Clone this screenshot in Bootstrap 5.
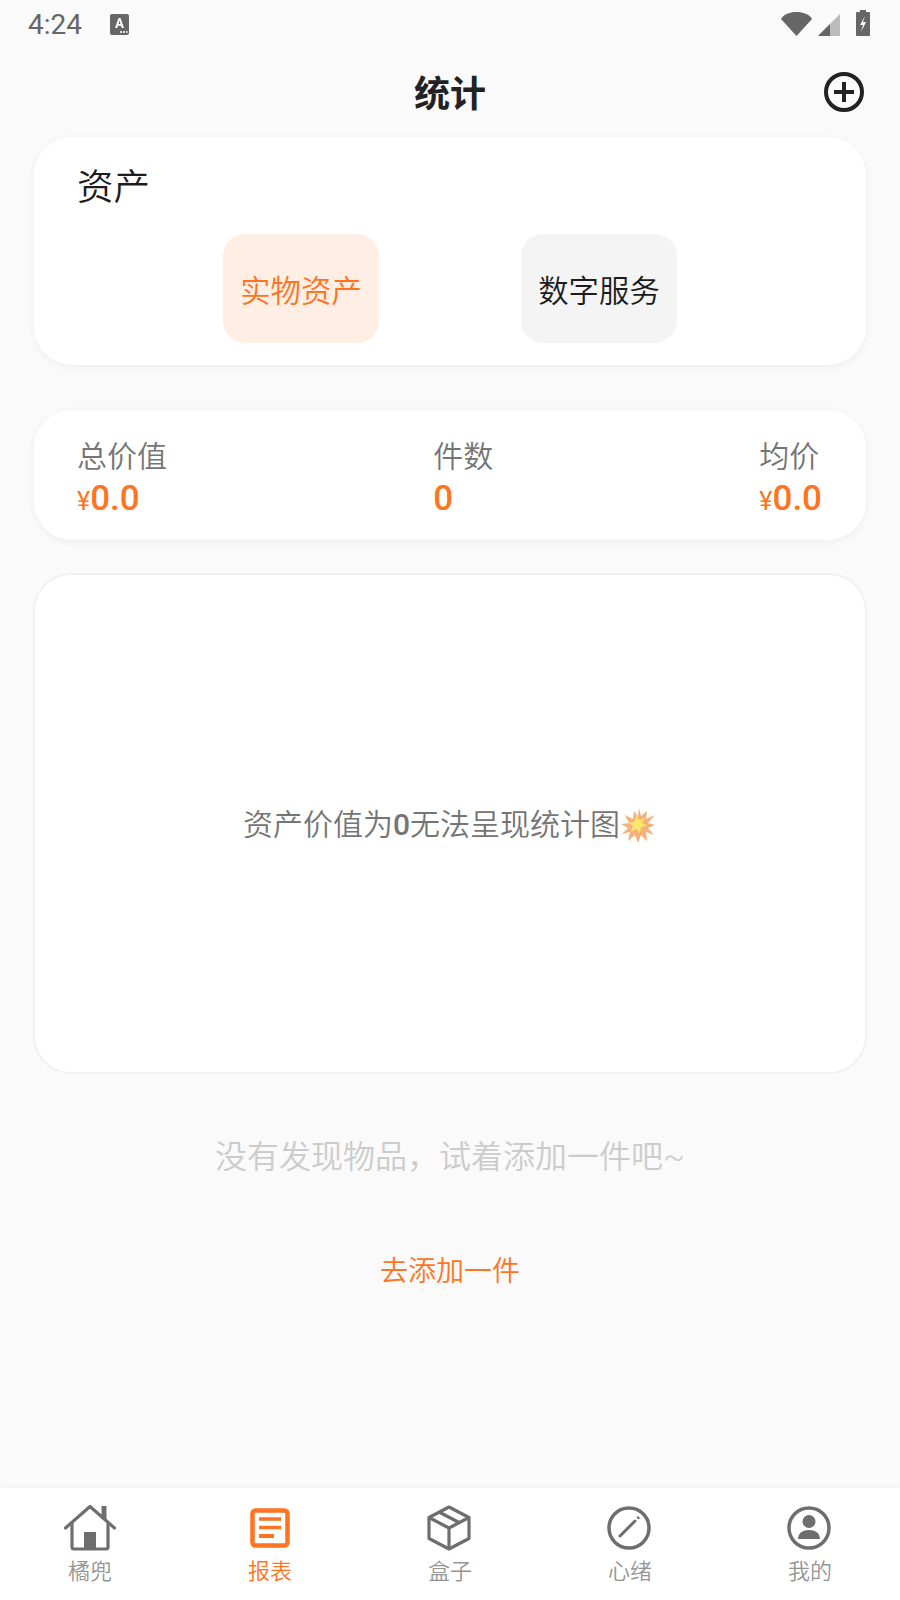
<!DOCTYPE html>
<html lang="zh-CN">
  <head>
    <meta charset="UTF-8" />
    <meta name="viewport" content="width=device-width, initial-scale=1" />
    <title>统计</title>
    <link href="https://cdn.jsdelivr.net/npm/bootstrap@5.3.2/dist/css/bootstrap.min.css" rel="stylesheet" />
    <style>
      body {
        background-color: #fafafa;
        font-family: "Roboto", "Noto Sans CJK SC", sans-serif;
        color: #222;
        width: 900px;
        height: 1600px;
        overflow: hidden;
      }
      .app-screen { height: 1600px; }
      .status-row { height: 50px; padding: 0 30px 0 28px; color: #666; }
      .status-time { font-size: 28px; line-height: 50px; width: 82px; }
      .status-icons { margin-bottom: 4px; }
      .signal-icon { margin: 0 16px 0 6px; }
      .title-row { height: 87px; position: relative; }
      .title-text { font-size: 36px; font-weight: 700; line-height: 91px; margin: 0; }
      .add-btn { position: absolute; right: 36px; top: 22px; line-height: 0; }
      .sheet {
        margin: 0 34px;
        background: #fff;
        border-radius: 38px;
        box-shadow: 0 2px 10px rgba(0, 0, 0, 0.05);
      }
      .asset-sheet { height: 228px; padding: 27px 43px 0; }
      .asset-title { font-size: 36.5px; line-height: 48px; font-weight: 350; color: #1c1c1c; }
      .asset-types { gap: 142px; margin-top: 22px; }
      .asset-type {
        width: 156px;
        height: 109px;
        border-radius: 22px;
        font-size: 30.4px;
        font-weight: 350;
        padding-top: 7px;
        background: #f4f4f4;
        color: #1c1c1c;
      }
      .asset-type.is-on { background: #ffeee4; color: #ff7420; }
      .sum-sheet { height: 130px; margin-top: 45px; padding: 27px 44px 0 43px; }
      .sum-label { font-size: 30px; line-height: 40px; color: #757575; font-weight: 350; }
      .sum-value { font-size: 35px; font-weight: 500; line-height: 44px; color: #ff7420; }
      .sum-value small { font-size: 25px; font-weight: 400; }
      .chart-sheet {
        height: 501px;
        margin: 33px 33px 0;
        padding-top: 2px;
        border: 2px solid #f1f1f1;
        box-shadow: none;
        font-size: 30px;
        font-weight: 350;
        color: #757575;
      }
      .chart-sheet b { font-weight: 500; }
      .burst-icon { margin: 0 2px 0 -1px; }
      .empty-text { margin-top: 60px; font-size: 32px; line-height: 46px; color: #ccc; font-weight: 350; }
      .add-link { margin-top: 69px; font-size: 28px; line-height: 46px; color: #ff7420; font-weight: 350; }
      .tabbar {
        height: 112px;
        background: #fff;
        box-shadow: 0 -2px 4px rgba(0, 0, 0, 0.03);
      }
      .tab-item { width: 180px; color: #959595; font-size: 22px; line-height: 30px; font-weight: 350; }
      .tab-item.is-on { color: #ff7420; }
      .tab-icon { height: 50px; margin-top: 15px; margin-bottom: 4px; }
      .nudge-left { margin-right: 3px; }
    </style>
  </head>
  <body>
    <div class="app-screen d-flex flex-column">
      <div class="status-row d-flex align-items-center">
        <span class="status-time">4:24</span>
        <svg width="19" height="22" viewBox="0 0 19 22">
          <rect width="19" height="21" x="0" y="0" rx="2" fill="#666" />
          <path d="M5 14 8.500 4h2l3.500 10h-2.200l-.7-2.200H7.900L7.200 14zM8.500 10h2L9.500 6.600z" fill="#fff" />
          <path d="M10 17h2v2h-2zM13 17h2v2h-2zM16 17h1.500v2H16z" fill="#ddd" />
        </svg>
        <div class="status-icons ms-auto d-flex align-items-end">
          <svg width="31" height="25" viewBox="0 0 31 25"><path d="M0 8C3 3 9 1 15.500 1S28 3 31 8L15.500 25z" fill="#666" /></svg>
          <svg width="22" height="22" viewBox="0 0 22 22" class="signal-icon"><path d="M22 0v22H0z" fill="#bbb" /><path d="M12 10v12H0z" fill="#666" /></svg>
          <svg width="14" height="26" viewBox="0 0 14 26"><path d="M4 0h6v2h3a1 1 0 0 1 1 1v22a1 1 0 0 1-1 1H1a1 1 0 0 1-1-1V3a1 1 0 0 1 1-1h3z" fill="#666" /><path d="M9 6 4 15h3l-2 7 5-10H7z" fill="#fff" /></svg>
        </div>
      </div>

      <div class="title-row text-center">
        <h1 class="title-text">统计</h1>
        <svg class="add-btn" width="40" height="40" viewBox="0 0 40 40" fill="none" stroke="#222" stroke-width="4">
          <circle cx="20" cy="20" r="18" />
          <path d="M20 10v20M10 20h20" />
        </svg>
      </div>

      <div class="sheet asset-sheet">
        <div class="asset-title">资产</div>
        <div class="asset-types d-flex justify-content-center">
          <div class="asset-type is-on d-flex align-items-center justify-content-center">实物资产</div>
          <div class="asset-type d-flex align-items-center justify-content-center">数字服务</div>
        </div>
      </div>

      <div class="sheet sum-sheet d-flex justify-content-between">
        <div>
          <div class="sum-label">总价值</div>
          <div class="sum-value"><small>¥</small>0.0</div>
        </div>
        <div>
          <div class="sum-label">件数</div>
          <div class="sum-value">0</div>
        </div>
        <div>
          <div class="sum-label">均价</div>
          <div class="sum-value"><small>¥</small>0.0</div>
        </div>
      </div>

      <div class="sheet chart-sheet d-flex align-items-center justify-content-center">
        <span>资产价值为<b>0</b>无法呈现统计图</span>
        <svg width="36" height="36" viewBox="0 0 36 36" class="burst-icon">
          <path d="M20 1l2 8 6-5-1 8 9-4-7 8 7 2-7 3 6 7-8-3 1 9-6-6-3 8-3-8-7 6 2-9-8 2 6-6-7-4 8-1-4-8 8 4 1-8 4 6z" fill="#f6b07a" />
          <path d="M18 8l2 5 6-2-3 5 5 3-6 1-1 6-4-4-5 3 2-6-5-3 6-1z" fill="#fae66a" />
        </svg>
      </div>

      <div class="empty-text text-center">没有发现物品，试着添加一件吧~</div>
      <div class="add-link text-center">去添加一件</div>

      <div class="tabbar mt-auto d-flex">
        <div class="tab-item text-center">
          <div class="tab-icon d-flex align-items-center justify-content-center">
            <svg width="52" height="46" viewBox="0 0 52 46" fill="none" stroke="#6e6e6e" stroke-width="3.200" stroke-linecap="round" stroke-linejoin="round">
              <path d="M1.500 23 26 1.500 50.500 23" />
              <path d="M8 18v24a2 2 0 0 0 2 2h32a2 2 0 0 0 2-2V18" />
              <path d="M40 1v13" stroke-width="5" stroke-linecap="butt" />
              <rect x="20" y="27" width="12" height="17" fill="#6e6e6e" stroke="none" />
            </svg>
          </div>
          橘兜
        </div>
        <div class="tab-item is-on text-center">
          <div class="tab-icon d-flex align-items-center justify-content-center">
            <svg width="40" height="40" viewBox="0 0 40 40" fill="none" stroke="#ff7420" stroke-width="4.500">
              <rect x="2.500" y="2.500" width="35" height="35" rx="3" />
              <path d="M9 11h22M9 19.500h22" stroke-width="3.500" />
              <path d="M9 28h15" stroke-width="4" />
            </svg>
          </div>
          报表
        </div>
        <div class="tab-item text-center">
          <div class="tab-icon d-flex align-items-center justify-content-center">
            <svg width="44" height="46" viewBox="0 0 44 46" class="nudge-left" fill="none" stroke="#6e6e6e" stroke-width="3.200" stroke-linejoin="round">
              <path d="M22 2 42 12.500v21L22 44 2 33.500v-21z" />
              <path d="M2 12.500 22 23l20-10.500M22 23v21M12 7l20 10.500" />
            </svg>
          </div>
          盒子
        </div>
        <div class="tab-item text-center">
          <div class="tab-icon d-flex align-items-center justify-content-center">
            <svg width="44" height="44" viewBox="0 0 44 44" class="nudge-left" fill="none" stroke="#6e6e6e" stroke-width="3.500">
              <circle cx="22" cy="22" r="20" />
              <path d="M13 30 28 15" stroke-linecap="round" stroke-width="3" />
              <path d="M30.500 12.500l1.500-1.500" stroke-width="3" />
            </svg>
          </div>
          心绪
        </div>
        <div class="tab-item text-center">
          <div class="tab-icon d-flex align-items-center justify-content-center">
            <svg width="44" height="44" viewBox="0 0 44 44" class="nudge-left" fill="none" stroke="#6e6e6e" stroke-width="3.500">
              <circle cx="22" cy="22" r="20" />
              <circle cx="22" cy="15.500" r="6.500" fill="#6e6e6e" stroke="none" />
              <path d="M11 33c0-6 5-9 11-9s11 3 11 9z" fill="#6e6e6e" stroke="none" />
            </svg>
          </div>
          我的
        </div>
      </div>
    </div>
  </body>
</html>
